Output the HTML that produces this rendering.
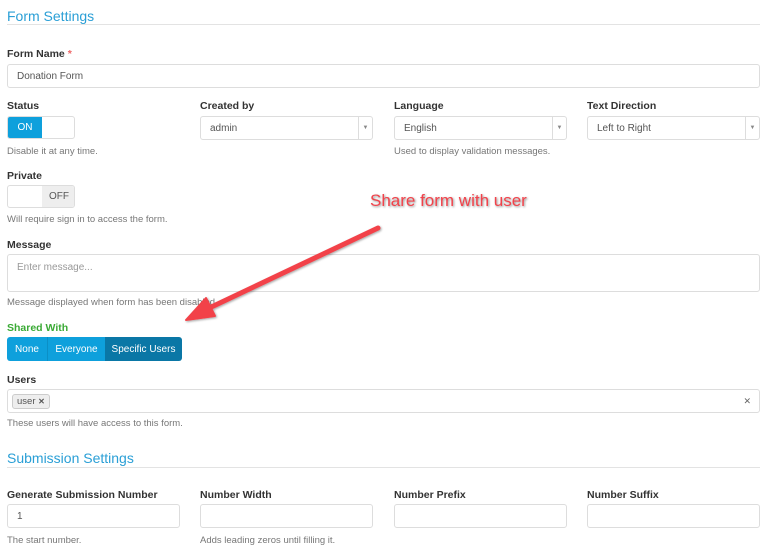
<!DOCTYPE html>
<html><head><meta charset="utf-8"><style>
*{box-sizing:border-box;margin:0;padding:0}
body{width:768px;height:553px;background:#fff;font-family:"Liberation Sans",sans-serif;position:relative;overflow:hidden;color:#333}
.a{position:absolute}
.h{font-size:14px;color:#2a9fd6}
.line{height:1px;background:#e3e3e3}
.lbl{font-size:10.5px;font-weight:bold;color:#333}
.help{font-size:9.5px;color:#777}
.inp{border:1px solid #ddd;border-radius:3px;background:#fff;font-size:10px;color:#555;padding-left:9px;display:flex;align-items:center}
.sel .car{position:absolute;right:0;top:0;bottom:0;width:14px;border-left:1px solid #ddd;font-size:6px;color:#888;display:flex;align-items:center;justify-content:center}
</style></head><body>
<div class="a h" style="left:7px;top:8px">Form Settings</div>
<div class="a line" style="left:7px;top:24px;width:753px"></div>

<div class="a lbl" style="left:7px;top:48px">Form Name <span style="color:#e66">*</span></div>
<div class="a inp" style="left:7px;top:64px;width:753px;height:24px">Donation Form</div>

<div class="a lbl" style="left:7px;top:100px">Status</div>
<div class="a lbl" style="left:200px;top:100px">Created by</div>
<div class="a lbl" style="left:394px;top:100px">Language</div>
<div class="a lbl" style="left:587px;top:100px">Text Direction</div>

<div class="a" style="left:7px;top:116px;width:68px;height:23px;border:1px solid #ddd;border-radius:3px;overflow:hidden">
<div style="width:34px;height:100%;background:#0ea0dc;color:#fff;font-size:10px;display:flex;align-items:center;justify-content:center">ON</div></div>
<div class="a inp sel" style="left:200px;top:116px;width:173px;height:24px">admin<span class="car">▼</span></div>
<div class="a inp sel" style="left:394px;top:116px;width:173px;height:24px">English<span class="car">▼</span></div>
<div class="a inp sel" style="left:587px;top:116px;width:173px;height:24px">Left to Right<span class="car">▼</span></div>
<div class="a help" style="left:7px;top:146px">Disable it at any time.</div>
<div class="a help" style="left:394px;top:146px">Used to display validation messages.</div>

<div class="a lbl" style="left:7px;top:170px">Private</div>
<div class="a" style="left:7px;top:185px;width:68px;height:23px;border:1px solid #ddd;border-radius:3px;overflow:hidden">
<div style="margin-left:34px;width:34px;height:100%;background:#eee;color:#555;font-size:10px;display:flex;align-items:center;justify-content:center">OFF</div></div>
<div class="a help" style="left:7px;top:214px">Will require sign in to access the form.</div>

<div class="a lbl" style="left:7px;top:239px">Message</div>
<div class="a inp" style="left:7px;top:254px;width:753px;height:38px;align-items:flex-start;padding-top:7px;color:#999">Enter message...</div>
<div class="a help" style="left:7px;top:297px">Message displayed when form has been disabled.</div>

<div class="a lbl" style="left:7px;top:322px;color:#3aaa35">Shared With</div>
<div class="a" style="left:7px;top:337px;height:24px;display:flex;border-radius:3px;overflow:hidden;font-size:10px;color:#fff">
<div style="width:41px;background:#0ea0dc;display:flex;align-items:center;justify-content:center;border-right:1px solid #0b8fc6">None</div>
<div style="width:57px;background:#0ea0dc;display:flex;align-items:center;justify-content:center">Everyone</div>
<div style="width:77px;background:#0a77a6;display:flex;align-items:center;justify-content:center">Specific Users</div></div>

<div class="a lbl" style="left:7px;top:374px">Users</div>
<div class="a inp" style="left:7px;top:389px;width:753px;height:24px;padding-left:4px">
<span style="border:1px solid #ccc;background:#eee;border-radius:3px;padding:1px 4px;font-size:9.5px;color:#555">user <b style="font-size:8px">✕</b></span>
<span style="position:absolute;right:8px;font-size:9px;color:#666">✕</span></div>
<div class="a help" style="left:7px;top:418px">These users will have access to this form.</div>

<div class="a h" style="left:7px;top:450px">Submission Settings</div>
<div class="a line" style="left:7px;top:467px;width:753px"></div>

<div class="a lbl" style="left:7px;top:489px">Generate Submission Number</div>
<div class="a lbl" style="left:200px;top:489px">Number Width</div>
<div class="a lbl" style="left:394px;top:489px">Number Prefix</div>
<div class="a lbl" style="left:587px;top:489px">Number Suffix</div>
<div class="a inp" style="left:7px;top:504px;width:173px;height:24px">1</div>
<div class="a inp" style="left:200px;top:504px;width:173px;height:24px"></div>
<div class="a inp" style="left:394px;top:504px;width:173px;height:24px"></div>
<div class="a inp" style="left:587px;top:504px;width:173px;height:24px"></div>
<div class="a help" style="left:7px;top:535px">The start number.</div>
<div class="a help" style="left:200px;top:535px">Adds leading zeros until filling it.</div>

<div class="a" style="left:370px;top:191px;font-size:17px;color:#f2424a;text-shadow:1px 1px 2px rgba(0,0,0,.45)">Share form with user</div>
<svg class="a" style="left:0;top:0" width="768" height="553">
<defs><filter id="s"><feDropShadow dx="1" dy="1" stdDeviation="1" flood-opacity=".35"/></filter></defs>
<g filter="url(#s)" fill="#f2424a" stroke="#f2424a">
<line x1="378" y1="228" x2="205" y2="310" stroke-width="5" stroke-linecap="round"/>
<polygon points="186,320 206,298 215,316" stroke-width="2" stroke-linejoin="round"/>
</g></svg>
</body></html>
